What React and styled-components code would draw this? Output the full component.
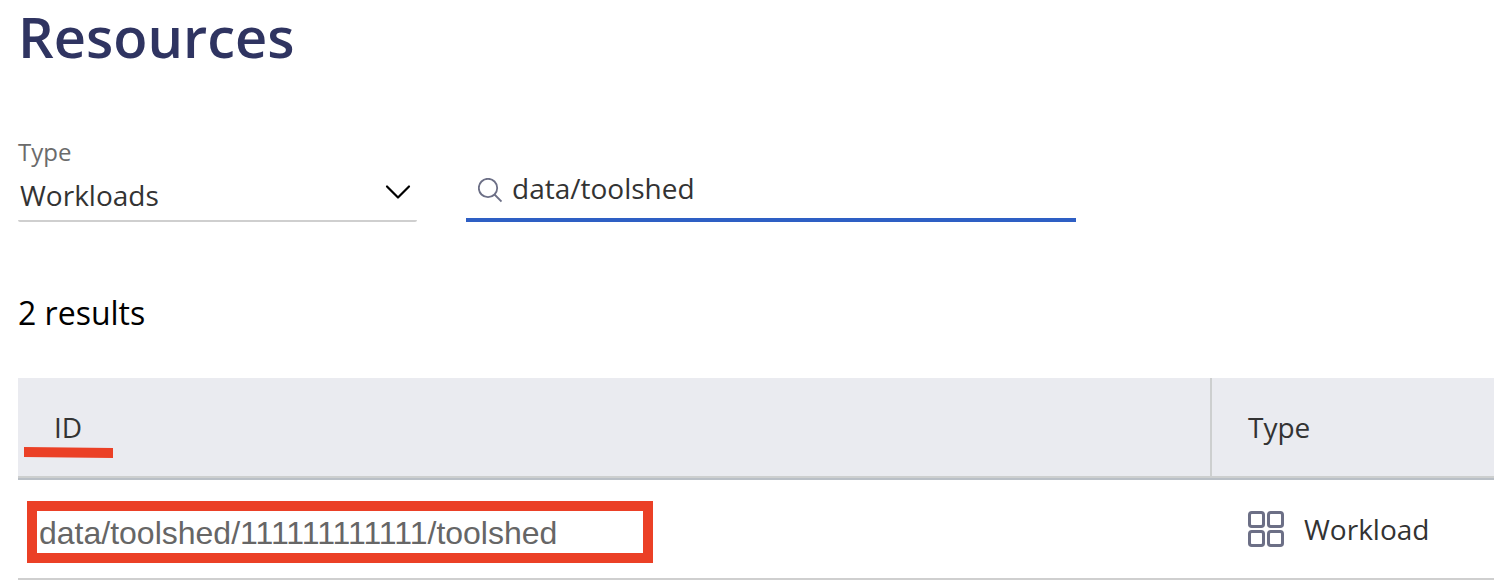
import React from 'react';
import styled, { createGlobalStyle } from 'styled-components';

const Global = createGlobalStyle`
  * { box-sizing: border-box; }
  body { margin: 0; background: #fff; font-family: "Open Sans", "Noto Sans", sans-serif; overflow: hidden; }
`;
const Page = styled.main`
  height: 580px;
  padding-left: 18px;
  overflow: hidden;
`;
const Title = styled.h1`
  margin: 0;
  height: 137px;
  font-size: 56px;
  line-height: 72px;
  font-weight: 600;
  color: #2f3461;
`;
const Filters = styled.div`
  display: flex;
  height: 85px;
  gap: 49px;
`;
const Select = styled.div`
  width: 399px;
  border-bottom: 2px solid #cfcfcf;
  border-radius: 2px;
`;
const Label = styled.div`
  font-size: 24px;
  line-height: 30px;
  color: #6b6b6b;
`;
const Value = styled.div`
  display: flex;
  justify-content: space-between;
  padding: 8px 6px 0 2px;
  font-size: 28px;
  line-height: 40px;
  color: #333;
`;
const Chevron = styled.svg`
  margin-top: 9px;
`;
const Search = styled.div`
  display: flex;
  width: 610px;
  gap: 10px;
  padding: 31px 0 0 12px;
  border-bottom: 4px solid #2e5fc4;
  font-size: 28px;
  line-height: 40px;
  color: #333;
`;
const SearchIcon = styled.svg`
  margin-top: 10px;
`;
const Results = styled.div`
  padding-top: 69px;
  height: 156px;
  font-size: 32px;
  line-height: 44px;
  color: #000;
`;
const Row = styled.div`
  display: grid;
  grid-template-columns: 1192px 1fr;
  height: 100px;
  font-size: 28px;
  line-height: 40px;
  color: #333;
  border-bottom: 2px solid #cfcfcf;
`;
const HeadRow = styled(Row)`
  height: 102px;
  background: #eaebf0;
  border-bottom: 2px solid #b9bfc6;
`;
const HeadCell = styled.div`
  padding: 29px 36px;
  border-bottom: 2px solid #cdcfcf;
  & + & { box-shadow: inset 2px 0 #cdcfcf; }
  & + & { padding-left: 38px; }
`;
const Underline = styled.svg`
  position: absolute;
  left: 24px;
  top: 446px;
`;
const IdCell = styled.div`
  padding: 21px 0 0 9px;
`;
const IdBox = styled.div`
  width: 626px;
  height: 62px;
  border: 10px solid #eb4026;
  padding-left: 2px;
  font: 32px/44px "Liberation Sans", Arial, sans-serif;
  color: #666;
`;
const TypeCell = styled.div`
  display: flex;
  gap: 20px;
  padding: 29px 0 0 38px;
`;
const GridIcon = styled.svg`
  margin-top: 2px;
`;

export default function App() {
  return (
    <Page>
      <Global />
      <Title>Resources</Title>
      <Filters>
        <Select>
          <Label>Type</Label>
          <Value>
            <span>Workloads</span>
            <Chevron width="26" height="16" viewBox="0 0 26 16" fill="none" stroke="#000" strokeWidth="2.2" strokeLinecap="round" strokeLinejoin="round"><path d="M2 2.500 13 13.500 24 2.500" /></Chevron>
          </Value>
        </Select>
        <Search>
          <SearchIcon width="24" height="26" viewBox="0 0 24 26" fill="none" stroke="#6c6f86" strokeWidth="1.8"><circle cx="10" cy="10" r="9.200" /><path d="M16.500 16.500 23.500 23.500" /></SearchIcon>
          <span>data/toolshed</span>
        </Search>
      </Filters>
      <Results>2 results</Results>
      <HeadRow>
        <HeadCell>ID</HeadCell>
        <HeadCell>Type</HeadCell>
      </HeadRow>
      <Row>
        <IdCell><IdBox>data/toolshed/111111111111/toolshed</IdBox></IdCell>
        <TypeCell>
          <GridIcon width="36" height="36" viewBox="0 0 36 36" fill="none" stroke="#6c6f86" strokeWidth="3">
            <rect x="1.500" y="1.500" width="14" height="14" rx="2.300" />
            <rect x="20.500" y="1.500" width="14" height="14" rx="2.300" />
            <rect x="1.500" y="20.500" width="14" height="14" rx="2.300" />
            <rect x="20.500" y="20.500" width="14" height="14" rx="2.300" />
          </GridIcon>
          <span>Workload</span>
        </TypeCell>
      </Row>
      <Underline width="90" height="13" viewBox="0 0 90 13"><path d="M0 1 89 2V12L0 11Z" fill="#eb4026" /></Underline>
    </Page>
  );
}
